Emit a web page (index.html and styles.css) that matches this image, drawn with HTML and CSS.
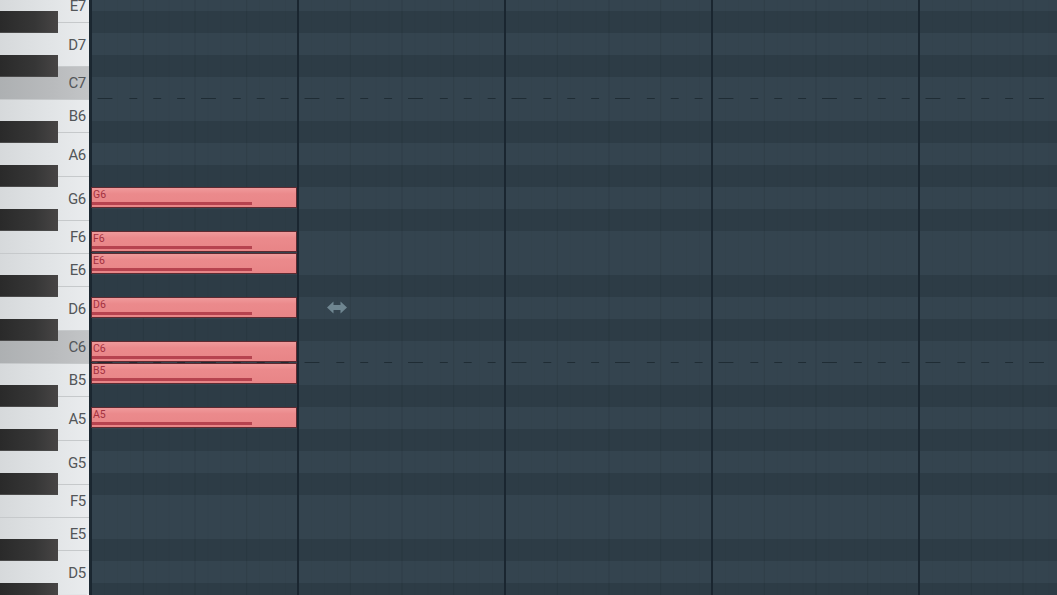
FILE: index.html
```html
<!DOCTYPE html>
<html lang="en">
<head>
    <meta charset="UTF-8">
    <meta name="viewport" content="width=device-width, initial-scale=1.0">
    <title>Piano Roll</title>
    <link rel="stylesheet" href="styles.css">
</head>
<body>
    <div class="roll">
        <div class="keyboard">
            <div class="keys">
                <div class="key sharp"><span>E7</span></div>
                <div class="key tall sharp"><span>D7</span></div>
                <div class="key c"><span>C7</span></div>
                <div class="key sharp"><span>B6</span></div>
                <div class="key tall sharp"><span>A6</span></div>
                <div class="key tall sharp"><span>G6</span></div>
                <div class="key"><span>F6</span></div>
                <div class="key sharp"><span>E6</span></div>
                <div class="key tall sharp"><span>D6</span></div>
                <div class="key c"><span>C6</span></div>
                <div class="key sharp"><span>B5</span></div>
                <div class="key tall sharp"><span>A5</span></div>
                <div class="key tall sharp"><span>G5</span></div>
                <div class="key"><span>F5</span></div>
                <div class="key sharp"><span>E5</span></div>
                <div class="key tall sharp"><span>D5</span></div>
            </div>
        </div>
        <div class="grid">
            <!-- notes sit on their pitch row: top = row index * 22 -->
            <div class="note" style="top: 187px"><span>G6</span></div>
            <div class="note" style="top: 231px"><span>F6</span></div>
            <div class="note" style="top: 253px"><span>E6</span></div>
            <div class="note" style="top: 297px"><span>D6</span></div>
            <div class="note" style="top: 341px"><span>C6</span></div>
            <div class="note" style="top: 363px"><span>B5</span></div>
            <div class="note" style="top: 407px"><span>A5</span></div>
            <svg class="cursor" width="20" height="13" viewBox="0 0 20 13">
                <path d="M0 6.5 L6.5 0.5 L6.5 4 L13.5 4 L13.5 0.5 L20 6.5 L13.5 12.5 L13.5 9 L6.5 9 L6.5 12.5 Z" fill="#6f8691"/>
            </svg>
        </div>
    </div>
</body>
</html>
```

FILE: styles.css
```css
body {
    margin: 0;
    height: 595px;
    overflow: hidden;
    background-color: #2d3c46;
    font-family: Roboto, "Liberation Sans", sans-serif;
}
.roll {
    display: flex;
    height: 595px;
}
.keyboard {
    width: 89px;
    height: 595px;
    flex-shrink: 0;
    border-right: 2px solid #1c2831;
    overflow: hidden;
    background-color: #e2e5e7;
    box-shadow: inset -2px 0 0 #f1f3f4;
}
.keys {
    display: flex;
    flex-direction: column;
    margin-top: -11px;
}
.key {
    position: relative;
    height: 33px;
    box-sizing: border-box;
    border-top: 1px solid #c6c9cb;
    background: linear-gradient(to right, #d6d9db 0%, #e2e5e7 60%, #eaecee 100%);
    display: flex;
    align-items: center;
    justify-content: flex-end;
    padding-right: 3px;
}
.key.tall {
    height: 44px;
}
.key.c {
    background: linear-gradient(to right, #adb0b2 0%, #b9bbbd 60%, #c3c5c7 100%);
}
.key span {
    font-size: 15px;
    color: #535659;
    letter-spacing: -0.3px;
}
.key.sharp::after {
    content: '';
    position: absolute;
    left: 0;
    bottom: -11px;
    width: 58px;
    height: 22px;
    z-index: 1;
    background: linear-gradient(to right, #2a2a2a 0%, #363636 60%, #474545 100%);
    box-shadow: inset 0 -1px 0 #4a4a4a;
}
.grid {
    position: relative;
    flex: 1;
    height: 595px;
    overflow: hidden;
    background-color: #2d3c46;
    background-image:
        /* octave lines */
        linear-gradient(to right, #1f2c34 0, #1f2c34 15px, transparent 15px, transparent 32px, #1f2c34 32px, #1f2c34 40px, transparent 40px, transparent 56px, #1f2c34 56px, #1f2c34 64px, transparent 64px, transparent 80px, #1f2c34 80px, #1f2c34 88px, transparent 88px),
        linear-gradient(to right, #1f2c34 0, #1f2c34 15px, transparent 15px, transparent 32px, #1f2c34 32px, #1f2c34 40px, transparent 40px, transparent 56px, #1f2c34 56px, #1f2c34 64px, transparent 64px, transparent 80px, #1f2c34 80px, #1f2c34 88px, transparent 88px),
        /* bar lines */
        repeating-linear-gradient(to right, #1a2630 0, #1a2630 2px, transparent 2px, transparent 207px),
        /* beat lines */
        repeating-linear-gradient(to right, rgba(0, 0, 0, 0.08) 0, rgba(0, 0, 0, 0.08) 1px, transparent 1px, transparent 51.75px),
        /* step lines */
        repeating-linear-gradient(to right, rgba(0, 0, 0, 0.025) 0, rgba(0, 0, 0, 0.025) 1px, transparent 1px, transparent 12.9375px),
        /* pitch rows, one octave from B down to C */
        linear-gradient(to bottom,
            #34444f 0, #34444f 22px,
            #2d3c46 22px, #2d3c46 44px,
            #34444f 44px, #34444f 66px,
            #2d3c46 66px, #2d3c46 88px,
            #34444f 88px, #34444f 110px,
            #2d3c46 110px, #2d3c46 132px,
            #34444f 132px, #34444f 176px,
            #2d3c46 176px, #2d3c46 198px,
            #34444f 198px, #34444f 220px,
            #2d3c46 220px, #2d3c46 242px,
            #34444f 242px, #34444f 264px);
    background-size:
        103.5px 1px,
        103.5px 1px,
        207px 100%,
        51.75px 100%,
        12.9375px 100%,
        100% 264px;
    background-repeat:
        repeat-x,
        repeat-x,
        repeat-x,
        repeat-x,
        repeat-x,
        repeat-y;
    background-position:
        6.5px 98px,
        6.5px 362px,
        -1px 0,
        0 0,
        0 0,
        0 99px;
}
.note {
    position: absolute;
    left: 0;
    width: 206px;
    height: 21px;
    box-sizing: border-box;
    border: 1px solid #5e2a31;
    background: linear-gradient(to bottom, #f09a9b 0%, #eb8a8c 30%, #e88587 100%);
}
.note span {
    display: block;
    padding: 1px 0 0 1px;
    font-size: 10.5px;
    line-height: 11px;
    color: #a3313f;
}
.note::after {
    content: '';
    position: absolute;
    left: 0;
    bottom: 2px;
    width: 160px;
    height: 3px;
    background-color: #b6434f;
}
.cursor {
    position: absolute;
    left: 236px;
    top: 301px;
}
```
